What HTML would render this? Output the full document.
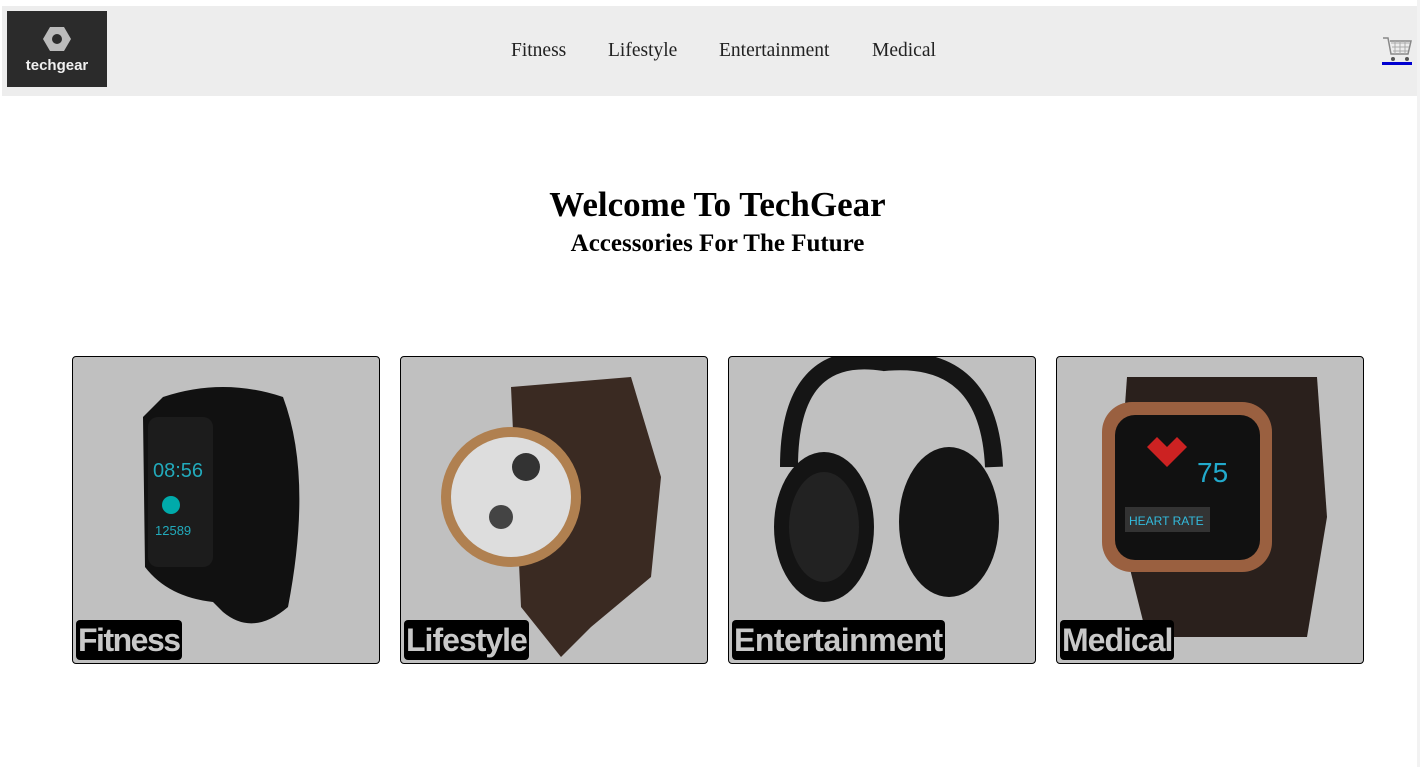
<!DOCTYPE html>
<html><head><meta charset="utf-8"><style>
*{margin:0;padding:0;box-sizing:border-box}
body{width:1420px;height:767px;background:#fff;position:relative;overflow:hidden;font-family:"Liberation Serif",serif}
.hdr{position:absolute;left:2px;top:6px;width:1415px;height:90px;background:#ededed}
.logo{position:absolute;left:7px;top:11px;width:100px;height:76px;background:#2b2b2b;color:#f0f0f0;font-family:"Liberation Sans",sans-serif;font-weight:bold;font-size:15px;text-align:center}
.logo span{position:absolute;left:0;right:0;top:46px}
.nav{position:absolute;top:40px;font-size:19.5px;color:#222}
h1{position:absolute;left:0;width:1435px;top:185px;text-align:center;font-size:35px;font-weight:bold}
h2{position:absolute;left:0;width:1435px;top:230px;text-align:center;font-size:25px;font-weight:bold}
.card{position:absolute;top:356px;width:308px;height:308px;background:#c0c0c0;border:1px solid #000;border-radius:4px;overflow:hidden}
.lbl{position:absolute;left:3px;top:263px;height:40px;background:#000;color:#c8c8c8;font-family:"Liberation Sans",sans-serif;font-weight:bold;font-size:32px;line-height:40px;padding:0 2px;border-radius:4px;letter-spacing:-1px}
.sb{position:absolute;left:1417px;top:0;width:3px;height:767px;background:#f2f2f2}
</style></head><body>
<div class="hdr"></div>
<div class="logo"><svg width="30" height="26" viewBox="0 0 30 26" style="position:absolute;left:35px;top:15px"><polygon points="8,1 22,1 29,13 22,25 8,25 1,13" fill="#bbb"/><circle cx="15" cy="13" r="5" fill="#2b2b2b"/></svg><span>techgear</span></div>
<div class="nav" style="left:511px">Fitness</div>
<div class="nav" style="left:608px">Lifestyle</div>
<div class="nav" style="left:719px">Entertainment</div>
<div class="nav" style="left:872px">Medical</div>
<svg style="position:absolute;left:1381px;top:34px" width="32" height="32" viewBox="0 0 32 32"><path d="M2 4h5l3 16h17l3-13H9" fill="none" stroke="#888" stroke-width="1.5"/><path d="M10 9h19M11 13h17M12 17h15M14 7v13M19 7v13M24 7v13" stroke="#aaa" stroke-width="1"/><circle cx="12" cy="25" r="2" fill="#555"/><circle cx="26" cy="25" r="2" fill="#555"/><rect x="1" y="28" width="30" height="3" fill="#0000d0"/></svg>
<h1>Welcome To TechGear</h1>
<h2>Accessories For The Future</h2>

<div class="card" style="left:72px">
<svg width="308" height="308"><path d="M90 40 Q150 20 210 40 Q240 120 215 250 Q180 280 150 255 L140 245 Q95 240 72 210 L70 60 Z" fill="#111"/><rect x="75" y="60" width="65" height="150" rx="10" fill="#1c1c1c"/><text x="80" y="120" fill="#2ab" font-size="20" font-family="Liberation Sans">08:56</text><circle cx="98" cy="148" r="9" fill="#0aa"/><text x="82" y="178" fill="#2ab" font-size="13" font-family="Liberation Sans">12589</text></svg>
<div class="lbl" style="letter-spacing:-1.5px">Fitness</div></div>

<div class="card" style="left:400px">
<svg width="308" height="308"><path d="M110 30 L230 20 L260 120 L250 220 L190 270 L160 300 L120 250 Z" fill="#3a2a22"/><circle cx="110" cy="140" r="70" fill="#b08050"/><circle cx="110" cy="140" r="60" fill="#ddd"/><circle cx="125" cy="110" r="14" fill="#333"/><circle cx="100" cy="160" r="12" fill="#444"/></svg>
<div class="lbl">Lifestyle</div></div>

<div class="card" style="left:728px">
<svg width="308" height="308"><path d="M60 110 Q60 -10 155 5 Q260 -5 265 110" fill="none" stroke="#151515" stroke-width="18"/><ellipse cx="95" cy="170" rx="50" ry="75" fill="#141414"/><ellipse cx="220" cy="165" rx="50" ry="75" fill="#141414"/><ellipse cx="95" cy="170" rx="35" ry="55" fill="#222"/></svg>
<div class="lbl" style="letter-spacing:-0.5px">Entertainment</div></div>

<div class="card" style="left:1056px">
<svg width="308" height="308"><path d="M70 20 L260 20 L270 160 L250 280 L90 280 L60 160 Z" fill="#2a201c"/><rect x="45" y="45" width="170" height="170" rx="30" fill="#9a6040"/><rect x="58" y="58" width="145" height="145" rx="20" fill="#111"/><path d="M90 90 l10-10 10 10 10-10 10 10 -20 20z" fill="#c22"/><text x="140" y="125" fill="#2ac" font-size="28" font-family="Liberation Sans">75</text><rect x="68" y="150" width="85" height="25" fill="#333"/><text x="72" y="168" fill="#3bd" font-size="12" font-family="Liberation Sans">HEART RATE</text></svg>
<div class="lbl">Medical</div></div>
<div class="sb"></div>
</body></html>
